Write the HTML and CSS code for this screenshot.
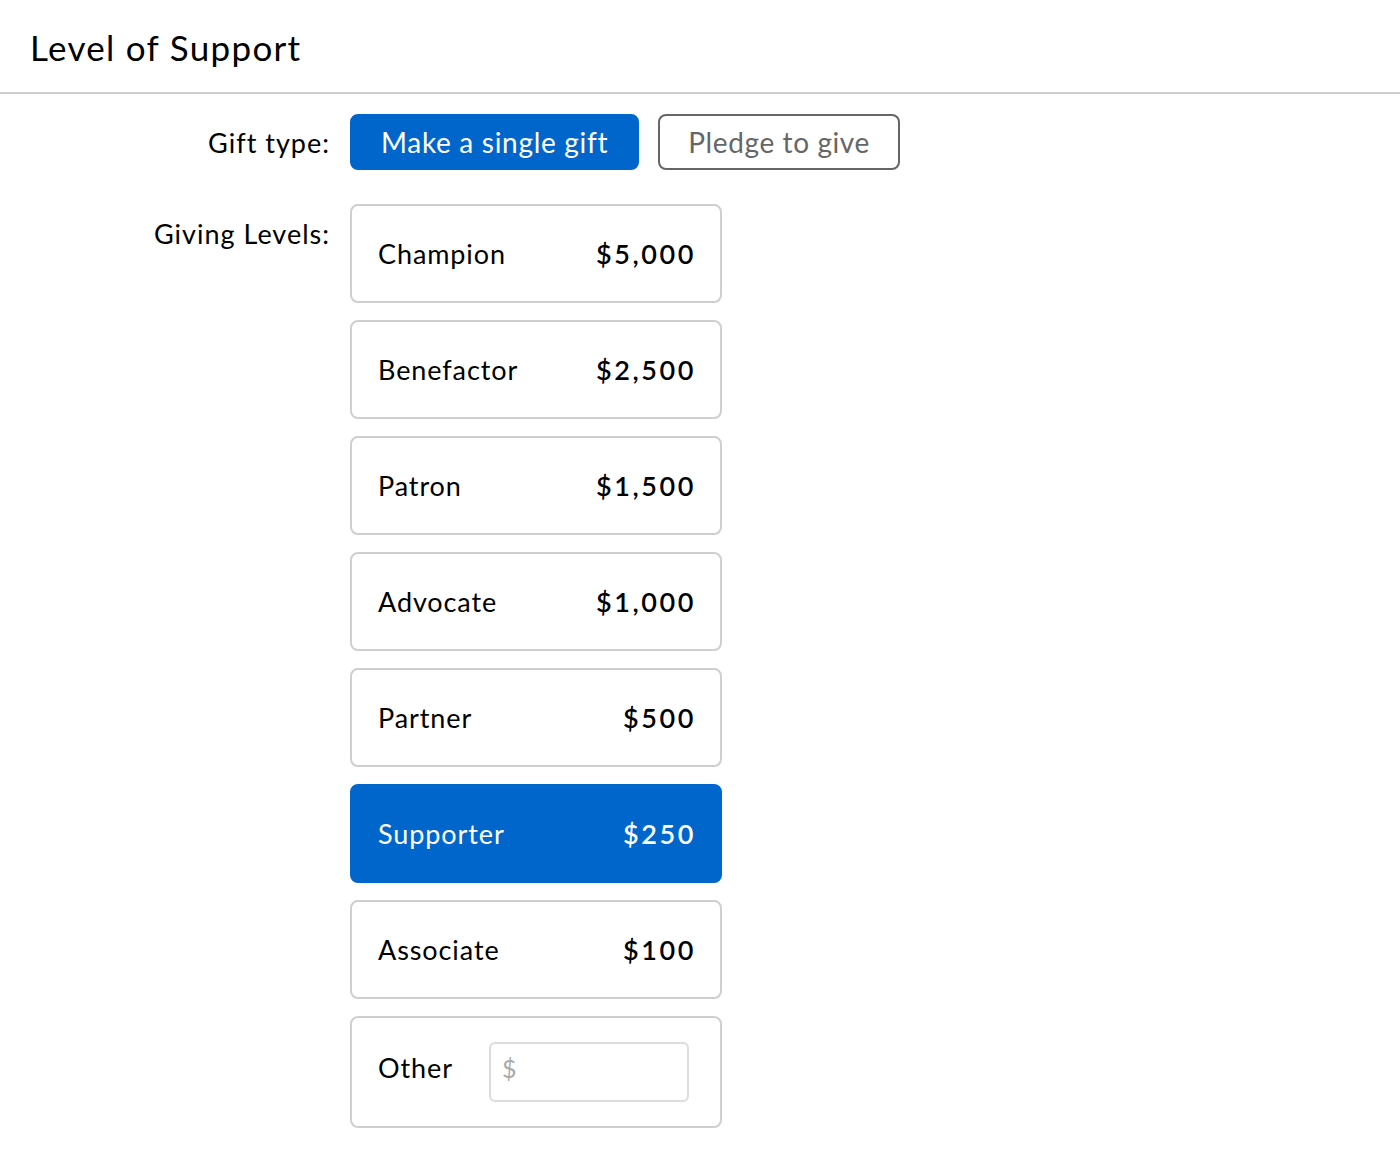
FILE: index.html
```html
<!DOCTYPE html>
<html lang="en">
<head>
<meta charset="utf-8">
<title>Level of Support</title>
<link rel="stylesheet" href="styles.css">
</head>
<body>
<header class="section-header">
  <h1 class="section-title">Level of Support</h1>
</header>
<main class="form">
  <div class="form-row gift-row">
    <div class="form-label">Gift type:</div>
    <div class="gift-types">
      <button class="gift-btn is-active" type="button">Make a single gift</button>
      <button class="gift-btn" type="button">Pledge to give</button>
    </div>
  </div>
  <div class="form-row levels-row">
    <div class="form-label levels-label">Giving Levels:</div>
    <div class="levels">
      <div class="level"><span class="level-name">Champion</span><span class="level-amount">$5,000</span></div>
      <div class="level"><span class="level-name">Benefactor</span><span class="level-amount">$2,500</span></div>
      <div class="level"><span class="level-name">Patron</span><span class="level-amount">$1,500</span></div>
      <div class="level"><span class="level-name">Advocate</span><span class="level-amount">$1,000</span></div>
      <div class="level"><span class="level-name">Partner</span><span class="level-amount">$500</span></div>
      <div class="level is-selected"><span class="level-name">Supporter</span><span class="level-amount">$250</span></div>
      <div class="level"><span class="level-name">Associate</span><span class="level-amount">$100</span></div>
      <div class="level level-other"><span class="level-name">Other</span><input class="other-input" type="text" placeholder="$"></div>
    </div>
  </div>
</main>
</body>
</html>
```
FILE: styles.css
```css
* { box-sizing: border-box; }
body {
  margin: 0;
  font-family: Lato, "Open Sans", sans-serif;
  color: #000;
  background: #fff;
}
.section-header {
  height: 94px;
  border-bottom: 2px solid #cfcfcf;
  padding: 24px 0 0 30px;
}
.section-title {
  margin: 0;
  font-size: 35px;
  font-weight: 400;
  line-height: 46px;
  letter-spacing: 1.3px;
}
.form {
  padding-top: 20px;
}
.form-row {
  display: grid;
  grid-template-columns: 330px 1fr;
  column-gap: 20px;
}
.form-label {
  text-align: right;
  font-size: 27px;
  line-height: 58px;
  letter-spacing: 1px;
}
.gift-types {
  display: flex;
  gap: 19px;
}
.gift-btn {
  height: 56px;
  border-radius: 8px;
  font-family: inherit;
  font-size: 28px;
  padding: 0 29px;
  background: #fff;
  color: #666;
  border: 2px solid #666;
  letter-spacing: 0.7px;
}
.gift-btn.is-active {
  background: #0066cc;
  border-color: #0066cc;
  color: #fff;
}
.gift-btn:not(.is-active) {
  padding: 0 28px;
  letter-spacing: 0.6px;
}
.levels-row {
  margin-top: 32px;
}
.levels-label {
  line-height: 60px;
}
.levels {
  display: flex;
  flex-direction: column;
  gap: 17px;
  width: 372px;
}
.level {
  height: 99px;
  border: 2px solid #cfcfcf;
  border-radius: 8px;
  display: flex;
  align-items: center;
  justify-content: space-between;
  padding: 0 26px 0 26px;
  font-size: 27px;
}
.level-name {
  letter-spacing: 0.9px;
}
.level-amount {
  font-weight: 600;
  letter-spacing: 2.6px;
  margin-right: -2px;
}
.level.is-selected {
  background: #0066cc;
  border-color: #0066cc;
  color: #fff;
}
.level-other {
  height: 112px;
  justify-content: flex-start;
  gap: 36px;
}
.level-other .level-name {
  margin-bottom: 10px;
}
.other-input {
  width: 200px;
  height: 60px;
  border: 2px solid #dcdcdc;
  border-radius: 6px;
  padding: 0 11px 8px;
  font-family: inherit;
  font-size: 25px;
  outline: none;
}
.other-input::placeholder {
  color: #aaa;
}
```
